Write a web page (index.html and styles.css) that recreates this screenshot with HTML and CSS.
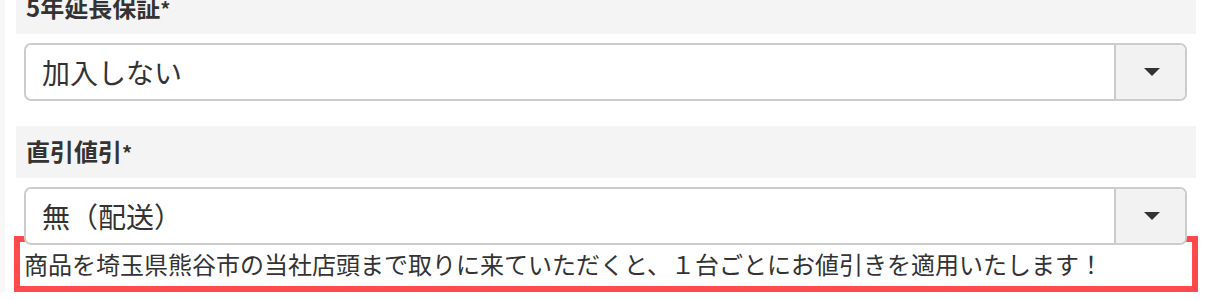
FILE: index.html
```html
<!DOCTYPE html>
<html lang="ja">
<head>
<meta charset="utf-8">
<link rel="stylesheet" href="styles.css">
</head>
<body>
<div class="page">
  <div class="group first">
    <div class="label">5年延長保証<span class="req">*</span></div>
    <div class="select">
      <div class="value">加入しない</div>
      <div class="caret"><span class="tri"></span></div>
    </div>
  </div>
  <div class="group">
    <div class="label">直引値引<span class="req">*</span></div>
    <div class="select">
      <div class="value">無（配送）</div>
      <div class="caret"><span class="tri"></span></div>
    </div>
    <div class="help">商品を埼玉県熊谷市の当社店頭まで取りに来ていただくと、１台ごとにお値引きを適用いたします！</div>
  </div>
</div>
</body>
</html>
```

FILE: styles.css
```css
html, body {
  margin: 0;
  padding: 0;
  background: #ffffff;
}
body {
  font-family: "Noto Sans CJK JP", "Noto Sans", sans-serif;
  color: #333333;
  overflow: hidden;
}
.page {
  border-left: 5px solid #f7f7f7;
  padding-left: 11px;
  width: 1180px;
  margin-top: -18px;
}
.group {
  display: flex;
  flex-direction: column;
}
.group + .group {
  margin-top: 25px;
}
.label {
  height: 52px;
  line-height: 50px;
  background: #f4f4f4;
  padding-left: 10px;
  font-size: 24px;
  font-weight: 700;
  color: #333333;
  box-sizing: border-box;
}
.req {
  font-size: 20px;
}
.select {
  position: relative;
  z-index: 1;
  margin: 9px 9px 0 8px;
  height: 58px;
  box-sizing: border-box;
  border: 2px solid #cccccc;
  border-radius: 7px;
  background: #ffffff;
  display: flex;
  overflow: hidden;
}
.value {
  flex: 1;
  padding-left: 16px;
  font-size: 28px;
  line-height: 54px;
  color: #333333;
}
.caret {
  width: 69px;
  border-left: 2px solid #cccccc;
  background: #f2f2f2;
  display: flex;
  align-items: center;
  justify-content: center;
}
.tri {
  width: 0;
  height: 0;
  border-left: 8px solid transparent;
  border-right: 8px solid transparent;
  border-top: 8px solid #333333;
  margin-left: 2px;
}
.help {
  margin: -9px -2px 0 -2px;
  border: 6px solid #fe4a4c;
  padding: 0 4px;
  font-size: 24px;
  line-height: 44px;
  color: #333333;
  white-space: nowrap;
}
```
